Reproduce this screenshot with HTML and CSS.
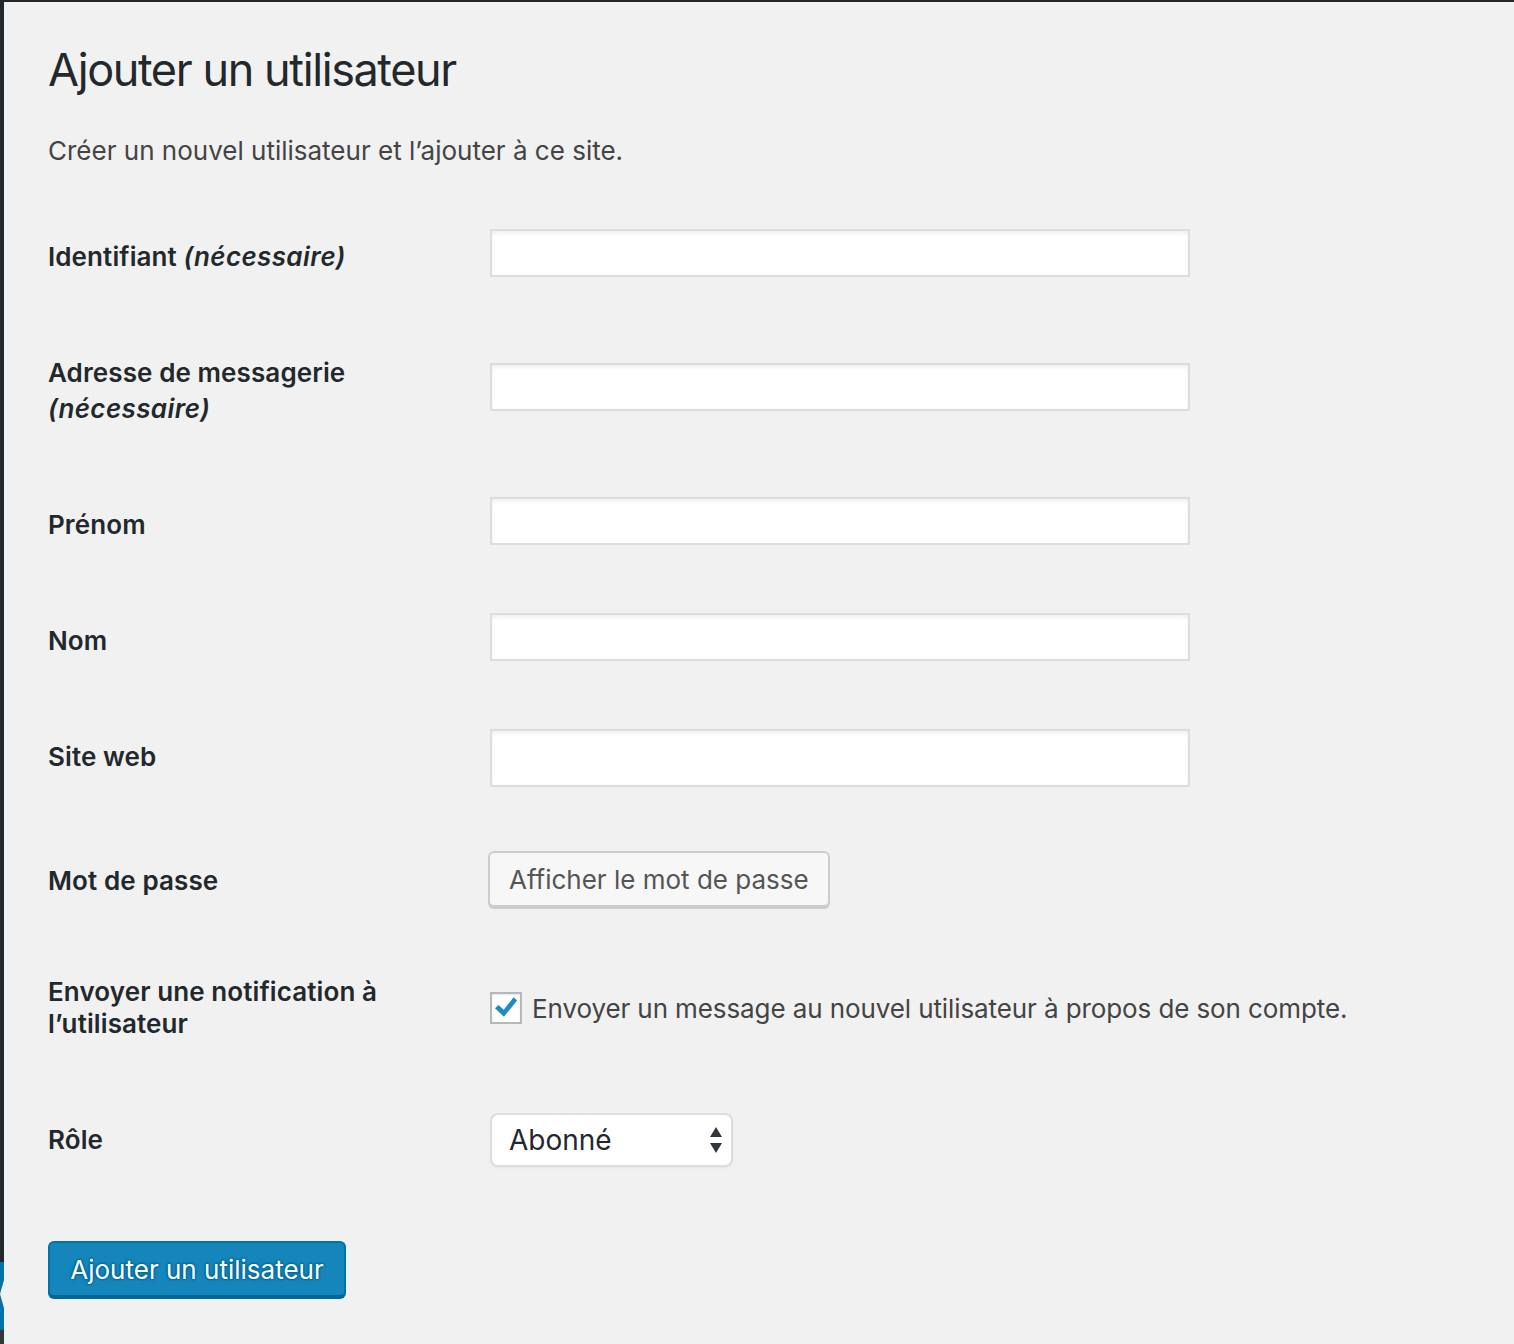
FILE: index.html
```html
<!DOCTYPE html>
<html lang="fr">
<head>
<meta charset="utf-8">
<title>Ajouter un utilisateur</title>
<link rel="stylesheet" href="styles.css">
</head>
<body>
<div class="screen">
  <div class="rail">
    <div class="rail-dark"></div>
    <div class="rail-blue"><span class="rail-notch"></span></div>
    <div class="rail-dark2"></div>
  </div>
  <main class="wrap">
    <h1 class="title">Ajouter un utilisateur</h1>
    <p class="desc">Créer un nouvel utilisateur et l’ajouter à ce site.</p>
    <table class="form-table">
      <tr>
        <th>Identifiant <em>(nécessaire)</em></th>
        <td><input class="field" type="text"></td>
      </tr>
      <tr>
        <th>Adresse de messagerie<br><em>(nécessaire)</em></th>
        <td><input class="field" type="text"></td>
      </tr>
      <tr>
        <th>Prénom</th>
        <td><input class="field" type="text"></td>
      </tr>
      <tr>
        <th>Nom</th>
        <td><input class="field" type="text"></td>
      </tr>
      <tr>
        <th>Site web</th>
        <td><input class="field field-url" type="text"></td>
      </tr>
      <tr class="row-pass">
        <th>Mot de passe</th>
        <td><button class="btn" type="button">Afficher le mot de passe</button></td>
      </tr>
      <tr class="row-notify">
        <th>Envoyer une notification à<br>l’utilisateur</th>
        <td>
          <label class="check">
            <span class="box"><svg viewBox="0 0 20 20" width="26" height="26"><path d="M1.5 10.2 L4.3 7.6 L8.3 11.4 L15.8 1.8 L18.6 4.2 L8.4 16.8 Z" fill="#1e8cbe"/></svg></span>
            <span>Envoyer un message au nouvel utilisateur à propos de son compte.</span>
          </label>
        </td>
      </tr>
      <tr>
        <th>Rôle</th>
        <td>
          <div class="select">
            <span>Abonné</span>
            <svg class="arrows" viewBox="0 0 14 30" width="14" height="30"><path d="M1 12 L7 2 L13 12 Z M1 18 L13 18 L7 28 Z" fill="#32373c"/></svg>
          </div>
        </td>
      </tr>
    </table>
    <div class="submit"><button class="btn-primary" type="button">Ajouter un utilisateur</button></div>
  </main>
</div>
</body>
</html>
```
FILE: styles.css
```css
html, body {
  margin: 0;
  padding: 0;
  background: #f1f1f1;
}
body {
  font-family: Inter, "Noto Sans", "Liberation Sans", sans-serif;
  color: #23282d;
}
.screen {
  display: flex;
  min-height: 1344px;
  border-top: 2px solid #23282d;
  box-sizing: border-box;
}
.rail {
  width: 4px;
  flex: none;
  display: flex;
  flex-direction: column;
}
.rail-dark {
  height: 1260px;
  background: #23282d;
}
.rail-blue {
  height: 68px;
  background: #0073aa;
  position: relative;
}
.rail-notch {
  position: absolute;
  right: 0;
  top: 18px;
  width: 4px;
  height: 28px;
  background: #f1f1f1;
  clip-path: polygon(100% 0, 100% 100%, 0 50%);
}
.rail-dark2 {
  flex: 1;
  background: #32373c;
}
.wrap {
  flex: 1;
  padding-left: 44px;
}
.title {
  margin: 0;
  padding-top: 38px;
  font-size: 45px;
  font-weight: 400;
  line-height: 60px;
  letter-spacing: -1.4px;
  color: #23282d;
}
.desc {
  margin: 31px 0 0;
  font-size: 26px;
  line-height: 40px;
  color: #444;
}
.form-table {
  margin-top: 28px;
  border-collapse: collapse;
}
.form-table th {
  width: 442px;
  padding: 40px 0;
  text-align: left;
  vertical-align: top;
  font-size: 26px;
  font-weight: 600;
  line-height: 36px;
  letter-spacing: 0.1px;
  color: #23282d;
}
.form-table th em {
  font-style: italic;
  letter-spacing: 0.4px;
}
.form-table td {
  padding: 30px 0;
  vertical-align: middle;
}
.field {
  display: block;
  box-sizing: border-box;
  width: 700px;
  height: 48px;
  margin: 0 0 8px;
  border: 2px solid #ddd;
  background: #fff;
  box-shadow: inset 0 2px 4px rgba(0,0,0,0.07);
  font: inherit;
}
.field-url {
  height: 58px;
  margin-bottom: 6px;
}
.row-pass th {
  padding: 40px 0 35px;
}
.form-table .row-pass td {
  padding: 28px 0 27px;
  vertical-align: top;
}
.row-notify th {
  padding: 42px 0;
  line-height: 32px;
}
.btn {
  display: block;
  box-sizing: border-box;
  height: 56px;
  margin-left: -2px;
  padding: 0 19px;
  border: 2px solid #ccc;
  border-radius: 6px;
  background: #f7f7f7;
  box-shadow: 0 2px 0 #ccc;
  font-family: inherit;
  font-size: 26px;
  color: #555;
}
.check {
  display: flex;
  align-items: center;
  gap: 10px;
  font-size: 26px;
  letter-spacing: -0.1px;
  color: #444;
}
.box {
  box-sizing: border-box;
  width: 32px;
  height: 32px;
  border: 2px solid #b4b9be;
  background: #fff;
  display: flex;
  align-items: center;
  justify-content: center;
  box-shadow: inset 0 1px 2px rgba(0,0,0,0.1);
}
.select {
  box-sizing: border-box;
  width: 243px;
  height: 54px;
  border: 2px solid #ddd;
  border-radius: 8px;
  background: #fff;
  display: flex;
  align-items: center;
  justify-content: space-between;
  padding: 0 8px 0 17px;
  font-size: 28px;
  color: #23282d;
  box-shadow: 0 1px 2px rgba(0,0,0,0.05);
}
.submit {
  margin-top: 43px;
}
.btn-primary {
  box-sizing: border-box;
  height: 56px;
  width: 298px;
  padding: 0;
  border: 2px solid #0073aa;
  border-bottom-color: #006799;
  border-radius: 6px;
  background: #1586bb;
  box-shadow: 0 2px 0 #006799;
  color: #fff;
  font-family: inherit;
  font-size: 26px;
  text-shadow: 0 -1px 2px #006799, 1px 0 2px #006799, 0 1px 2px #006799, -1px 0 2px #006799;
}
```
